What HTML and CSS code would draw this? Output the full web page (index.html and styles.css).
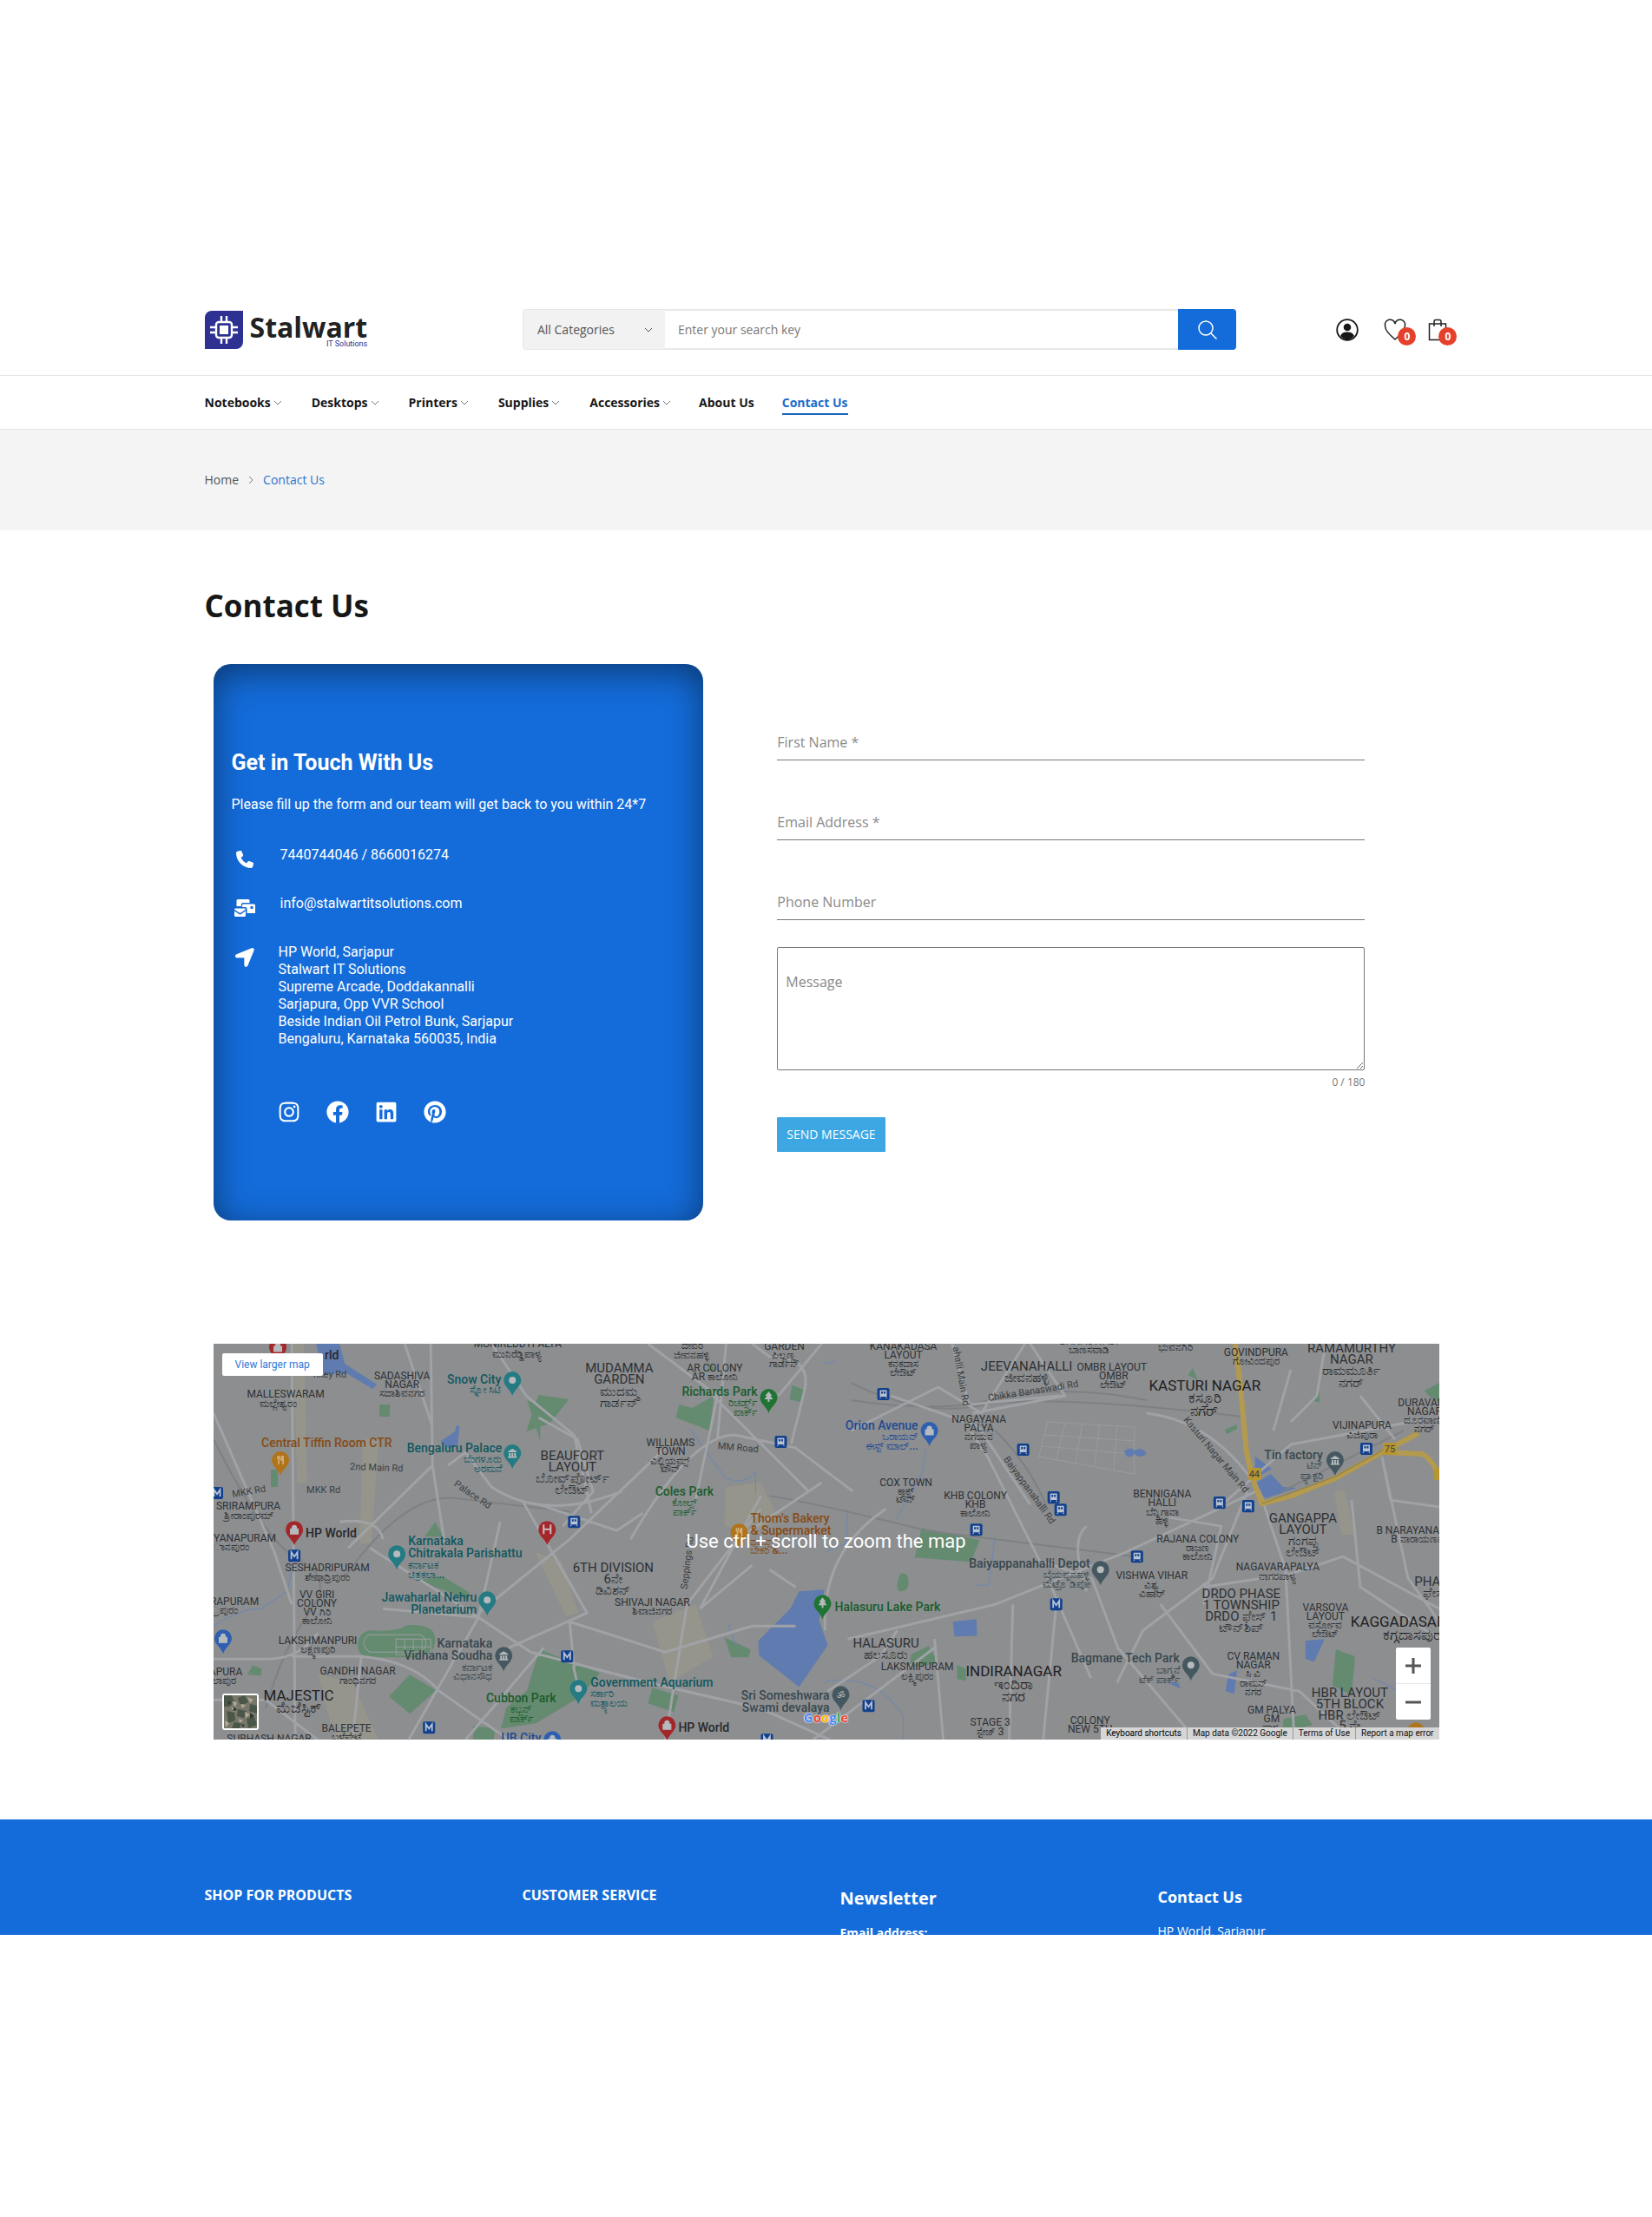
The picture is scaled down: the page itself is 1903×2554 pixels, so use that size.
FILE: index.html
```html
<!DOCTYPE html>
<html lang="en">
<head>
<meta charset="utf-8">
<meta name="viewport" content="width=device-width, initial-scale=1">
<title>Contact Us - Stalwart IT Solutions</title>
<link rel="stylesheet" href="styles.css">
</head>
<body>
<svg class="defs" aria-hidden="true">
  <symbol id="chev" viewBox="0 0 10 6"><path d="M1 1l4 4 4-4" fill="none" stroke="currentColor"/></symbol>
</svg>
<header class="site-header">
  <div class="container header-row">
    <a class="logo" href="#">
      <svg class="logo-mark" viewBox="0 0 44 44" aria-hidden="true">
        <path d="M8 0H44V36a8 8 0 0 1-8 8H0V8a8 8 0 0 1 8-8z" fill="#2e3192"/>
        <g fill="none" stroke="#fff" stroke-width="2.400"><rect x="13" y="13" width="18" height="18" rx="3"/><path d="M19 6v7M25 6v7M19 31v7M25 31v7M6 19h7M6 25h7M31 19h7M31 25h7"/></g>
        <rect x="17" y="17" width="10" height="10" fill="#fff"/>
      </svg>
      <span class="logo-text"><span class="logo-name">Stalwart</span><span class="logo-sub">IT Solutions</span></span>
    </a>
    <form class="search">
      <div class="search-cat">
        <select aria-label="Category"><option>All Categories</option></select>
        <svg width="10" height="6" aria-hidden="true"><use href="#chev"/></svg>
      </div>
      <input type="text" placeholder="Enter your search key" aria-label="Search">
      <button type="button" aria-label="Search"><svg width="24" height="24" viewBox="0 0 24 24" fill="none" stroke="#fff" stroke-width="1.5"><circle cx="10" cy="10" r="8"/><path d="M15.5 15.5l7 7"/></svg></button>
    </form>
    <nav class="tools" aria-label="Account">
      <a href="#" aria-label="Account"><svg width="26" height="26" viewBox="0 0 26 26"><circle cx="13" cy="13" r="11.8" fill="none" stroke="#171717" stroke-width="1.8"/><circle cx="13" cy="10" r="4.3" fill="#171717"/><path d="M5 20c2-4 5-4.500 8-4.500s6 .5 8 4.500c-2 2.700-5 4.300-8 4.300S7 22.700 5 20z" fill="#171717"/></svg></a>
      <a href="#" aria-label="Wishlist"><svg width="26" height="26" viewBox="0 0 26 26"><path d="M13 24C7 18.500 1.500 14 1.500 8a5.800 5.800 0 0 1 11.500-2A5.800 5.800 0 0 1 24.500 8c0 6-5.500 10.500-11.500 16z" fill="none" stroke="#222" stroke-width="1.500"/></svg><span class="badge">0</span></a>
      <a href="#" aria-label="Cart"><svg width="22" height="26" viewBox="0 0 22 26"><path d="M1.500 6h19v18.500h-19zM7 9V3.500a2 2 0 0 1 2-2h4a2 2 0 0 1 2 2V9" fill="none" stroke="#222" stroke-width="1.500"/></svg><span class="badge">0</span></a>
    </nav>
  </div>
</header>
<nav class="main-nav" aria-label="Main">
  <div class="container nav-row">
    <a href="#">Notebooks<svg width="10" height="6"><use href="#chev"/></svg></a>
    <a href="#">Desktops<svg width="10" height="6"><use href="#chev"/></svg></a>
    <a href="#">Printers<svg width="10" height="6"><use href="#chev"/></svg></a>
    <a href="#">Supplies<svg width="10" height="6"><use href="#chev"/></svg></a>
    <a href="#">Accessories<svg width="10" height="6"><use href="#chev"/></svg></a>
    <a href="#">About Us</a>
    <a href="#" class="active">Contact Us</a>
  </div>
</nav>
<div class="crumbs">
  <nav class="container crumb-row" aria-label="Breadcrumb">
    <a href="#">Home</a>
    <svg width="6" height="10" viewBox="0 0 6 10"><path d="M1 1l4 4-4 4" fill="none" stroke="#777"/></svg>
    <span>Contact Us</span>
  </nav>
</div>
<main class="container">
  <h1>Contact Us</h1>
  <div class="contact-row">
    <section class="card">
      <h2>Get in Touch With Us</h2>
      <p class="lead">Please fill up the form and our team will get back to you within 24*7</p>
      <ul class="info">
        <li><svg width="20" height="20" viewBox="0 0 512 512"><path d="M164.900 24.600c-7.700-18.600-28-28.500-47.400-23.200l-88 24C12.100 30.200 0 46 0 64C0 311.400 200.600 512 448 512c18 0 33.800-12.100 38.600-29.500l24-88c5.300-19.400-4.600-39.700-23.200-47.400l-96-40c-16.300-6.800-35.200-2.100-46.300 11.600L304.700 368C234.300 334.700 177.300 277.700 144 207.300L193.300 167c13.700-11.200 18.400-30 11.600-46.300l-40-96z"/></svg><span class="one">7440744046 / 8660016274</span></li>
        <li><svg width="24" height="20" viewBox="0 0 24 20"><path d="M4 0h12a1.500 1.500 0 0 1 1.500 1.500V4H10a2 2 0 0 0-2 2v2H2.500V1.500A1.500 1.500 0 0 1 4 0z"/><path fill-rule="evenodd" d="M10.500 5.500h12A1.500 1.500 0 0 1 24 7v9h-9.500v-5a2 2 0 0 0-2-2H9V7a1.500 1.500 0 0 1 1.500-1.500zM18.500 8v3h3V8z"/><path d="M1.500 10.500h10a1.500 1.500 0 0 1 1.500 1.200L6.500 16 0 11.700a1.500 1.500 0 0 1 1.500-1.200zM0 13.500l6.500 4.200 6.500-4.200v5a1.500 1.500 0 0 1-1.500 1.500h-10A1.500 1.500 0 0 1 0 18.500z"/></svg><span class="one">info@stalwartitsolutions.com</span></li>
        <li><svg width="22" height="22" viewBox="16 40 424 432"><path d="M429.600 92.100c4.900-11.900 2.100-25.600-7-34.700s-22.800-11.900-34.700-7l-352 144c-14.200 5.800-22.200 20.800-19.300 35.800s16.100 25.800 31.400 25.800H224V432c0 15.300 10.800 28.400 25.800 31.400s30-5.100 35.800-19.300l144-352z" stroke="#fff" stroke-width="16"/></svg><address>HP World, Sarjapur<br>Stalwart IT Solutions<br>Supreme Arcade, Doddakannalli<br>Sarjapura, Opp VVR School<br>Beside Indian Oil Petrol Bunk, Sarjapur<br>Bengaluru, Karnataka 560035, India</address></li>
      </ul>
      <div class="social">
        <a href="#" aria-label="Instagram"><svg viewBox="0 0 448 512"><path d="M224.100 141c-63.600 0-114.900 51.300-114.900 114.900s51.300 114.900 114.900 114.900S339 319.500 339 255.900 287.700 141 224.100 141zm0 189.600c-41.100 0-74.700-33.500-74.700-74.700s33.500-74.700 74.700-74.700 74.700 33.500 74.700 74.700-33.600 74.700-74.700 74.700zm146.400-194.300c0 14.900-12 26.800-26.800 26.800-14.900 0-26.800-12-26.800-26.800s12-26.800 26.800-26.800 26.800 12 26.800 26.800zm76.100 27.200c-1.700-35.900-9.900-67.700-36.200-93.900-26.200-26.200-58-34.400-93.900-36.200-37-2.100-147.900-2.100-184.900 0-35.800 1.700-67.600 9.900-93.900 36.100s-34.400 58-36.200 93.900c-2.100 37-2.100 147.900 0 184.900 1.700 35.900 9.900 67.700 36.200 93.900s58 34.400 93.900 36.200c37 2.100 147.900 2.100 184.900 0 35.900-1.700 67.700-9.900 93.900-36.200 26.200-26.200 34.400-58 36.200-93.900 2.100-37 2.100-147.800 0-184.800zM398.800 388c-7.800 19.600-22.900 34.700-42.600 42.600-29.500 11.700-99.500 9-132.100 9s-102.700 2.600-132.100-9c-19.600-7.800-34.700-22.900-42.600-42.600-11.700-29.500-9-99.500-9-132.100s-2.600-102.700 9-132.100c7.800-19.600 22.900-34.700 42.600-42.600 29.500-11.700 99.500-9 132.100-9s102.700-2.600 132.100 9c19.600 7.800 34.700 22.900 42.600 42.600 11.700 29.500 9 99.500 9 132.100s2.700 102.700-9 132.100z"/></svg></a>
        <a href="#" aria-label="Facebook"><svg viewBox="0 0 512 512"><path d="M504 256C504 119 393 8 256 8S8 119 8 256c0 123.780 90.690 226.380 209.250 245V327.690h-63V256h63v-54.640c0-62.150 37-96.480 93.670-96.480 27.140 0 55.520 4.840 55.520 4.840v61h-31.280c-30.800 0-40.410 19.120-40.410 38.730V256h68.780l-11 71.690h-57.780V501C413.310 482.380 504 379.780 504 256z"/></svg></a>
        <a href="#" aria-label="LinkedIn"><svg viewBox="0 0 448 512"><path d="M416 32H31.900C14.300 32 0 46.500 0 64.300v383.400C0 465.500 14.300 480 31.900 480H416c17.600 0 32-14.500 32-32.300V64.300c0-17.800-14.400-32.300-32-32.300zM135.400 416H69V202.200h66.500V416zm-33.200-243c-21.300 0-38.500-17.300-38.500-38.500S80.900 96 102.200 96c21.200 0 38.500 17.300 38.500 38.500 0 21.300-17.200 38.500-38.500 38.500zm282.100 243h-66.400V312c0-24.800-.5-56.700-34.500-56.700-34.600 0-39.900 27-39.900 54.900V416h-66.400V202.200h63.700v29.200h.9c8.900-16.800 30.600-34.500 62.900-34.500 67.200 0 79.700 44.300 79.700 101.900V416z"/></svg></a>
        <a href="#" aria-label="Pinterest"><svg viewBox="0 0 496 512"><path d="M496 256c0 137-111 248-248 248-25.600 0-50.200-3.900-73.400-11.100 10.100-16.500 25.200-43.500 30.800-65 3-11.600 15.400-59 15.400-59 8.100 15.400 31.700 28.500 56.800 28.500 74.800 0 128.700-68.800 128.700-154.300 0-81.900-66.900-143.200-152.900-143.200-107 0-163.900 71.800-163.900 150.100 0 36.400 19.400 81.700 50.300 96.100 4.700 2.200 7.200 1.200 8.300-3.300.8-3.400 5-20.300 6.900-28.100.6-2.500.3-4.700-1.700-7.100-10.100-12.500-18.300-35.300-18.300-56.600 0-54.700 41.400-107.600 112-107.600 60.900 0 103.600 41.500 103.600 100.900 0 67.100-33.900 113.600-78 113.600-24.300 0-42.600-20.100-36.700-44.800 7-29.500 20.500-61.300 20.500-82.600 0-19-10.200-34.900-31.400-34.900-24.900 0-44.900 25.700-44.900 60.200 0 22 7.400 36.800 7.400 36.800s-24.500 103.800-29 123.200c-5 21.400-3 51.600-.9 71.200C65.400 450.900 0 361.100 0 256 0 119 111 8 248 8s248 111 248 248z"/></svg></a>
      </div>
    </section>
    <form class="contact-form">
      <input type="text" placeholder="First Name *" aria-label="First Name">
      <input type="email" placeholder="Email Address *" aria-label="Email Address">
      <input type="tel" placeholder="Phone Number" aria-label="Phone Number">
      <textarea placeholder="Message" aria-label="Message" maxlength="180"></textarea>
      <span class="count">0 / 180</span>
      <button type="button">SEND MESSAGE</button>
    </form>
  </div>
  <section class="map" aria-label="Map">
    <svg class="map-canvas" viewBox="0 0 1411 456" preserveAspectRatio="xMidYMid slice">
      <defs>
        <pattern id="ga" width="46" height="38" patternUnits="userSpaceOnUse" patternTransform="rotate(3)"><path d="M0 5H46M0 14H30M12 24H46M0 32H46M6 0V38M17 5V32M30 0V24M39 14V38"/></pattern>
        <pattern id="gb" width="54" height="44" patternUnits="userSpaceOnUse" patternTransform="rotate(28)"><path d="M0 6H54M0 18H36M14 27H54M0 38H54M8 0V38M22 6V44M36 0V27M47 18V44"/></pattern>
        <pattern id="gc" width="50" height="50" patternUnits="userSpaceOnUse" patternTransform="rotate(-17)"><path d="M0 8H50M10 17H50M0 29H38M0 42H50M6 0V42M19 8V50M31 0V29M42 17V50"/></pattern>
        <g id="pin"><path d="M0 0C-2-7-10-11-10-18a10 10 0 1 1 20 0C10-11 2-7 0 0z"/></g>
        <g id="dot"><circle cy="-18" r="4" fill="#b5babc"/></g>
        <g id="bld"><path d="M-5-20l5-3 5 3v1H-5zM-4-18h2v4h-2zM-1-18h2v4h-2zM2-18h2v4h-2zM-5-14H5v1.500H-5z" fill="#b5babc"/></g>
        <g id="lock"><path d="M-4.500-19h9v6h-9zM-2.500-19v-1.500a2.500 2.500 0 0 1 5 0V-19" fill="#b5babc" stroke="#b5babc"/></g>
        <g id="fork"><path d="M-3-23v4M-1-23v4M-2-19v6M3-23v10M3-23q-2 1-2 5h2" fill="none" stroke="#d5b583" stroke-width="1.500"/></g>
        <g id="tree"><path d="M0-25l4 5H2l3 4H1v3h-2v-3h-4l3-4h-2z" fill="#b5babc"/></g>
        <g id="metro"><rect x="-7" y="-7" width="14" height="14" rx="2" fill="#12408c"/><path d="M-3.500 4v-8L0 1l3.500-5v8" fill="none" stroke="#b9c2d2" stroke-width="1.800"/></g>
        <g id="train"><rect x="-7" y="-7" width="14" height="14" rx="2" fill="#12408c"/><path fill-rule="evenodd" d="M-4-4.500h8v7.500h-8zM-2.500-3v2.500h2V-3zM.5-3v2.500h2V-3z" fill="#b9c2d2"/><path d="M-3 3.500l-1 1.500M3 3.500l1 1.500" stroke="#b9c2d2"/></g>
      </defs>
      <rect width="1411" height="456" fill="#8c8e90"/>
      <g stroke="#999b9e" fill="none">
        <path d="M0 0H250V190L200 456H0z" fill="url(#ga)" stroke="none"/>
        <path d="M250 200L560 215 600 456H200z" fill="url(#gb)" stroke="none"/>
        <path d="M380 0H620L560 215 250 200 300 100z" fill="url(#gc)" stroke="none" opacity=".6"/>
        <path d="M560 215L740 190 720 270 660 456H560z" fill="url(#gc)" stroke="none" opacity=".7"/>
        <path d="M620 0H960L990 75 870 95 760 180 600 160z" fill="url(#gb)" stroke="none" opacity=".7"/>
        <path d="M730 340H985L1010 456H700z" fill="url(#ga)" stroke="none"/>
        <path d="M1040 0H1411V110L1190 160 1040 70z" fill="url(#gc)" stroke="none" opacity=".8"/>
        <path d="M1060 250L1411 170V456H1050z" fill="url(#gb)" stroke="none" opacity=".7"/>
        <path d="M960 90L1060 96V150L950 130zM980 92L970 134M1000 92L992 138M1020 94L1014 140M1040 95L1036 146M957 105L1060 112M954 118L1060 127"/>
      </g>
      <g fill="#9c9a8a" opacity=".6">
        <path d="M92 0h12l4 160h-12zM172 110h18l-8 120h-14zM590 165l40-5 20 40-30 20-32-10zM505 320l50-20 20 60-50 30zM1290 170l12-2 12 52h-16zM370 240l30 10 20 60-14 4zM120 380l40 10 30 66h-50z"/>
      </g>
      <g fill="#648a70">
        <path d="M374 59l35 5-22 28-27 9zM536 70l15 4 25-14-5 40-39-15zM666 48l16 6-4 14-15-4zM191 70h12v14h-12zM66 145h8v20h-8zM361 65l15 7v40zM255 205l10 17h-22zM815 212l67 14-10 25-65-5zM790 265q9-3 10 8t-8 12-2-20zM803 358l20-10 12 20-34 4zM234 272l30-4 30 18v9zM375 352l70 27-24 28-50 30-40 6 6-24 24-20zM226 381l30 18-30 27-24-20zM588 338l30 14-2 9h-20zM505 396l30 9-5 19-30-10zM1394 54l17-9v23l-12-8zM1267 65l6-12v15l-8-3zM1292 352l22 8-4 45-22-12zM1232 432l25-5 8 12-35 8zM1164 99l14-6v5l-12 6zM856 370l10 4v14l-10-2zM299 440l26 3-3 13h-23zM45 370l10 4v8l-16-1zM1122 36l5-8 6 14zM570 22l8 7-9 4z"/>
        <path d="M182 330q30 2 40-6 34-2 33 17 0 20-26 20h-50q-13-1-13-16 2-14 16-15z"/>
      </g>
      <path d="M210 340h40v18h-40zM220 340v18M230 340v18M240 340v18M210 349h40M178 335h60q12 6 2 20h-60q-13-9-2-20" fill="none" stroke="#9a9fa0"/>
      <g fill="#5f7bb0">
        <path d="M118 0h27l6 23 37 24-5 5-30-18-26 1zM262 112l16-11 2-7 3 1-2 22-9 4-10-7zM674 285l29-2-6 36 10 28-33 48-46-36-1-17 37-37zM1199 130l19 14-19 11zM1217 150l14 15 16 1-36 12-14-16zM1048 124q8-6 12-1 10-5 14 4-8 6-14 0-8 8-12-3zM851 320l27-3 1 19-26 1zM1257 342l22-2-12 26-10-3zM1168 381l10-5-3 27-10-3zM1102 392l11 5-2-6-10-2z"/>
      </g>
      <g fill="none" stroke="#6f87b4">
        <path d="M548 98l40 55q20 12 36-5v25M820 120l-4 28-30 54M0 325q30-20 55-20l30-20 10-50M704 389q60-10 90 40v27M1335 385l30 15M900 220l-8 58h-14M730 190l-2 40-24 10M592 322l10 26M715 20q-10 5-14 0"/>
      </g>
      <g fill="none" stroke="#7e8083" stroke-width="2">
        <path d="M150 270q70-100 130-92l130 15M0 110q60 120 100 140t10 60-50 110M1074 65q-100-20-180 0-60 15-160 0M734 45q80 40 150 26t300 13M640 175q60 10 180 40l240 30M900 100q40 40 60 90M1370 100l-140 70"/>
      </g>
      <g fill="none" stroke="#a0a2a5" stroke-width="3" stroke-linejoin="round">
        <path d="M0 80L70 240l20 60M90 0l4 456M250 0l2 140 14 90M195 225q-5-25-50-20M270 140l20-15 30 40q60 40 150 5M155 235L252 140M220 0L252 95M320 0L360 60l55 45 20 90M374 85l45 25 18 60-35 40M480 225q70-120 120-120l70 15 66 50M590 0L580 110M620 0L640 15q50 0 40 40l-15 60M610 220l90-60M374 185l90 30 30-20M630 175L560 305M700 0L650 60M305 310L410 225 520 120M195 305L305 315l60 40L500 390l130 30 80 36M305 315L180 235M305 315L330 205M305 315l-80 140M355 180L430 310 340 350M380 350l-90 106M430 310l-40-70M410 320l110 35 100-30 50 0M410 320l5 55 8 35M0 363h60q40 0 60-30M90 360h80q60 5 90 40l80 56M0 410h60l60 46M170 360l-10 96M560 305l60-50M500 0l80 60-25 120M575 60l110 110M640 260l30 20M520 456L545 300 630 190M730 340L900 300 1050 240 1200 170M704 330q-5-90 70-140M871 100l20 30 60 120 60 20 30 80 90 106M1005 285q-20-60 0-75M970 300l-15 156M920 300l-4 156M830 340l10 116M707 400l60-40 20-30M690 456L830 350M1074 80q80 10 130 90l30 90 10 196M1160 186l80-70 160-30M1100 200l60 10-20 90M1140 280l100-15 60-20 111 60M1345 130l30 140 36 50M1345 130l10 50 56 8M1240 30l-20 70M1280 0l-10 60-30 30M1320 60l40 50M1190 170l-40 100-80 60-30 60M940 0l40 60-106 20M850 0l20 70 104-10M734 100l100-50 50 30 50-80M780 60l100 35 60 90M1010 385L960 270M1090 300l60 80 100 20 60 56M1310 180l10 100 91 60"/>
      </g>
      <g fill="none" stroke="#b39a4e" stroke-width="6" stroke-linejoin="round">
        <path d="M1176 0l6 49 7 76 7 30 11 29 34-9 50-20 56-31 40-21M1347 125l44 2q10 4 20 25"/>
        <path d="M1207 184l84-31 56-31" stroke="#8d7a40" stroke-width="1"/>
      </g>
      <g><rect x="1191" y="143" width="15" height="14" rx="2" fill="#b79530"/><rect x="1346" y="114" width="16" height="14" rx="2" fill="#b79530"/><rect x="1405" y="143" width="15" height="14" rx="2" fill="#b79530"/></g>
      <g class="mid sm"><text x="1198" y="154">44</text><text x="1354" y="125">75</text></g>

      <g class="mid area">
        <text x="83" y="62">MALLESWARAM</text><text x="74" y="73">ಮಲ್ಲೇಶ್ವರಂ</text>
        <text x="217" y="41">SADASHIVA</text><text x="217" y="51">NAGAR</text><text x="217" y="61">ಸದಾಶಿವನಗರ</text>
        <text x="350" y="4">MUNIREDDYPALYA</text><text x="350" y="16">ಮುನಿರೆಡ್ಡಿಪಾಳ್ಯ</text>
        <text x="40" y="191">SRIRAMPURA</text><text x="40" y="202">ಶ್ರೀರಾಂಪುರಮ್</text>
        <text x="36" y="228">YANAPURAM</text><text x="20" y="238">ಾನಪುರಂ</text>
        <text x="551" y="6">ದೇವರ</text><text x="551" y="17">ಜೀವನಹಳ್ಳಿ</text>
        <text x="577" y="32">AR COLONY</text><text x="577" y="42">AR ಕಾಲೋನಿ</text>
        <text x="657" y="7">GARDEN</text><text x="657" y="17">ಪಿಲ್ಲಣ್ಣ</text><text x="657" y="27">ಗಾರ್ಡನ್</text>
        <text x="526" y="118">WILLIAMS</text><text x="526" y="128">TOWN</text><text x="526" y="139">ವಿಲ್ಲಿಯಮ್ಸ್</text><text x="526" y="148">ಟೌನ್</text>
        <text x="794" y="7">KANAKADASA</text><text x="794" y="17">LAYOUT</text><text x="794" y="27">ಕನಕದಾಸ</text><text x="794" y="37">ಲೇಔಟ್</text>
        <text x="1008" y="1">BANASWADI</text><text x="1008" y="11">ಬಾಣಸವಾಡಿ</text>
        <text x="1034" y="31">OMBR LAYOUT</text><text x="1036" y="41">OMBR</text><text x="1036" y="51">ಲೇಔಟ್</text>
        <text x="881" y="91">NAGAYANA</text><text x="881" y="101">PALYA</text><text x="881" y="111">ನಗಯನ</text><text x="881" y="121">ಪಾಳ್ಯ</text>
        <text x="797" y="164">COX TOWN</text><text x="797" y="174">ಕಾಕ್ಸ್</text><text x="797" y="183">ಟೌನ್</text>
        <text x="877" y="179">KHB COLONY</text><text x="877" y="189">KHB</text><text x="877" y="199">ಕಾಲೋನಿ</text>
        <text x="1107" y="8">ಭುವನಗಿರಿ</text>
        <text x="1200" y="14">GOVINDPURA</text><text x="1200" y="24">ಗೋವಿಂದಪುರ</text>
        <text x="1392" y="72">DURAVANI</text><text x="1394" y="82">NAGAR</text><text x="1392" y="92">ದೂರವಾಣಿ</text><text x="1394" y="102">ನಗರ್</text>
        <text x="1322" y="98">VIJINAPURA</text><text x="1322" y="109">ವಿಜಿಪುರಾ</text>
        <text x="1092" y="177">BENNIGANA</text><text x="1092" y="187">HALLI</text><text x="1092" y="198">ಬೆನ್ನಿಗಾನಾ</text><text x="1092" y="208">ಹಳ್ಳಿ</text>
        <text x="1133" y="229">RAJANA COLONY</text><text x="1133" y="239">ರಾಜಣ</text><text x="1133" y="249">ಕಾಲೋನಿ</text>
        <text x="1390" y="219">B NARAYANAPURA</text><text x="1390" y="229">B ನಾರಾಯಣಪುರ</text>
        <text x="131" y="262">SESHADRIPURAM</text><text x="131" y="273">ಶೇಷಾದ್ರಿಪುರಂ</text>
        <text x="119" y="293">VV GIRI</text><text x="119" y="303">COLONY</text><text x="119" y="313">VV ಗಿರಿ</text><text x="119" y="323">ಕಾಲೋನಿ</text>
        <text x="24" y="301">RAPURAM</text><text x="12" y="311">್ರಪುರಂ</text>
        <text x="120" y="346">LAKSHMANPURI</text><text x="120" y="356">ಲಕ್ಷ್ಮಣಪುರಿ</text>
        <text x="14" y="382">APURA</text><text x="12" y="392">ಲಾಪುರ</text>
        <text x="166" y="381">GANDHI NAGAR</text><text x="166" y="392">ಗಾಂಧಿನಗರ</text>
        <text x="153" y="447">BALEPETE</text><text x="153" y="457">ಬಳೆಪೇಟೆ</text>
        <text x="64" y="459">SUBHASH NAGAR</text>
        <text x="505" y="302">SHIVAJI NAGAR</text><text x="505" y="312">ಶಿವಾಜಿನಗರ</text>
        <text x="810" y="376">LAKSMIPURAM</text><text x="810" y="387">ಲಕ್ಷ್ಮಿಪುರಂ</text>
        <text x="894" y="440">STAGE 3</text><text x="894" y="451">ಸ್ಟೇಜ್ 3</text>
        <text x="1009" y="438">COLONY</text><text x="1009" y="448">NEW 5TH</text>
        <text x="1080" y="271">VISHWA VIHAR</text><text x="1080" y="282">ವಿಶ್ವ</text><text x="1080" y="292">ವಿಹಾರ್</text>
        <text x="1225" y="261">NAGAVARAPALYA</text><text x="1225" y="272">ನಾಗರಪಾಳ್ಯ</text>
        <text x="1280" y="308">VARSOVA</text><text x="1280" y="318">LAYOUT</text><text x="1280" y="328">ವರ್ಸೋವ</text><text x="1280" y="338">ಲೇಔಟ್</text>
        <text x="1197" y="364">CV RAMAN</text><text x="1197" y="374">NAGAR</text><text x="1197" y="384">ಸಿ ವಿ</text><text x="1197" y="395">ರಾಮನ್</text><text x="1197" y="405">ನಗರ</text>
        <text x="1218" y="426">GM PALYA</text><text x="1218" y="436">GM</text><text x="1218" y="446">ಪಾಳ್ಯ</text>
      </g>
      <g class="mid area-md">
        <text x="467" y="33">MUDAMMA</text><text x="467" y="46">GARDEN</text><text x="467" y="60">ಮುದಮ್ಮ</text><text x="467" y="73">ಗಾರ್ಡನ್</text>
        <text x="413" y="134">BEAUFORT</text><text x="413" y="147">LAYOUT</text><text x="413" y="160">ಬೋವ್‌ಪೋರ್ಟ್</text><text x="413" y="173">ಲೇಔಟ್</text>
        <text x="936" y="31">JEEVANAHALLI</text><text x="936" y="44">ಜೀವನಹಳ್ಳಿ</text>
        <text x="1310" y="10">RAMAMURTHY</text><text x="1310" y="23">NAGAR</text><text x="1310" y="36">ರಾಮಮೂರ್ತಿ</text><text x="1310" y="50">ನಗರ್</text>
        <text x="1254" y="206">GANGAPPA</text><text x="1254" y="219">LAYOUT</text><text x="1254" y="232">ಗಂಗಪ್ಪ</text><text x="1254" y="245">ಲೇಔಟ್</text>
        <text x="460" y="263">6TH DIVISION</text><text x="460" y="276">6ನೇ</text><text x="460" y="289">ಡಿವಿಶನ್</text>
        <text x="774" y="350">HALASURU</text><text x="774" y="363">ಹಲಸೂರು</text>
        <text x="1183" y="293">DRDO PHASE</text><text x="1183" y="306">1 TOWNSHIP</text><text x="1183" y="319">DRDO ಫೇಸ್ 1</text><text x="1183" y="332">ಟೌನ್‌ಶಿಪ್</text>
        <text x="1308" y="407">HBR LAYOUT</text><text x="1308" y="420">5TH BLOCK</text><text x="1308" y="433">HBR ಲೇಔಟ್</text><text x="1308" y="445">5 ನೇ</text>
        <text x="1406" y="279">PHASE</text><text x="1406" y="292">ಫೇಸ್</text>
      </g>
      <g class="mid area-lg">
        <text x="1141" y="54">KASTURI NAGAR</text><text x="1141" y="68">ಕಸ್ತೂರಿ</text><text x="1141" y="83">ನಗರ್</text>
        <text x="98" y="411">MAJESTIC</text><text x="98" y="425">ಮೆಜೆಸ್ಟಿಕ್</text>
        <text x="921" y="383">INDIRANAGAR</text><text x="921" y="398">ಇಂದಿರಾ</text><text x="921" y="412">ನಗರ</text>
        <text x="1380" y="326">KAGGADASAPURA</text><text x="1380" y="341">ಕಗ್ಗದಾಸಪುರ</text>
      </g>

      <g class="poi">
        <g class="teal">
          <text class="end" x="331" y="46">Snow City</text><text class="end kn" x="331" y="57">ಸ್ನೋ ಸಿಟಿ</text>
          <text class="end" x="332" y="125">Bengaluru Palace</text><text class="end kn" x="332" y="137">ಬೆಂಗಳೂರು</text><text class="end kn" x="332" y="148">ಅರಮನೆ</text>
          <text x="224" y="232">Karnataka</text><text x="224" y="246">Chitrakala Parishattu</text><text class="kn" x="224" y="259">ಕರ್ನಾಟಕ</text><text class="kn" x="224" y="270">ಚಿತ್ರಕಲಾ...</text>
          <text class="end" x="303" y="297">Jawaharlal Nehru</text><text class="end" x="303" y="311">Planetarium</text>
          <text x="434" y="395">Government Aquarium</text><text class="kn" x="434" y="407">ಸರ್ಕಾರಿ</text><text class="kn" x="434" y="418">ಮತ್ಸ್ಯಾಲಯ</text>
        </g>
        <g class="orange">
          <text x="55" y="119">Central Tiffin Room CTR</text>
          <text x="618" y="206">Thom's Bakery</text><text x="618" y="220">&amp; Supermarket</text><text class="kn" x="618" y="232">ಥಾಮ್ಸ್</text><text class="kn" x="618" y="242">ಬೇಕರಿ &amp;...</text>
        </g>
        <g class="green">
          <text class="end" x="626" y="60">Richards Park</text><text class="end kn" x="626" y="72">ರಿಚರ್ಡ್ಸ್</text><text class="end kn" x="626" y="83">ಪಾರ್ಕ್</text>
          <text class="midt" x="542" y="175">Coles Park</text><text class="midt kn" x="542" y="187">ಕೋಲ್ಸ್</text><text class="midt kn" x="542" y="198">ಪಾರ್ಕ್</text>
          <text x="715" y="308">Halasuru Lake Park</text>
          <text class="midt" x="354" y="413">Cubbon Park</text><text class="midt kn" x="354" y="425">ಕಬ್ಬನ್</text><text class="midt kn" x="354" y="436">ಪಾರ್ಕ್</text>
        </g>
        <g class="blue">
          <text class="end" x="811" y="99">Orion Avenue</text><text class="end kn" x="811" y="111">ಒರಾಯನ್</text><text class="end kn" x="811" y="122">ಈಸ್ಟ್ ಮಾಲ್...</text>
          <text class="end" x="377" y="459">UB City</text>
        </g>
        <g class="dark">
          <text x="128" y="18">rld</text><text x="106" y="223">HP World</text><text x="535" y="447">HP World</text>
        </g>
        <g class="slate">
          <text class="end" x="1277" y="133">Tin factory</text><text class="end kn" x="1277" y="144">ಟಿನ್</text><text class="end kn" x="1277" y="156">ಫ್ಯಾಕ್ಟರಿ</text>
          <text class="end" x="1009" y="258">Baiyappanahalli Depot</text><text class="end kn" x="1009" y="270">ಬೈಯಪ್ಪನಹಳ್ಳಿ</text><text class="end kn" x="1009" y="281">ಮೆಟ್ರೊ ಡಿಪೋ</text>
          <text class="end" x="1112" y="367">Bagmane Tech Park</text><text class="end kn" x="1112" y="380">ಬಾಗ್ಮನೆ</text><text class="end kn" x="1112" y="391">ಟೆಕ್ ಪಾರ್ಕ್</text>
          <text class="end" x="321" y="350">Karnataka</text><text class="end" x="321" y="364">Vidhana Soudha</text><text class="end kn" x="321" y="377">ಕರ್ನಾಟಕ</text><text class="end kn" x="321" y="387">ವಿಧಾನಸೌಧ</text>
          <text class="end" x="709" y="410">Sri Someshwara</text><text class="end" x="709" y="424">Swami devalaya</text>
        </g>
      </g>
      <g class="sm">
        <text transform="translate(115 39)">nkey Rd</text><text transform="translate(22 177) rotate(-10)">MKK Rd</text><text x="107" y="172">MKK Rd</text>
        <text transform="translate(157 145) rotate(2)">2nd Main Rd</text><text transform="translate(276 163) rotate(34)">Palace Rd</text>
        <text transform="translate(580 121) rotate(5)">MM Road</text><text transform="translate(851 4) rotate(80)">ahalli Main Rd</text>
        <text transform="translate(892 66) rotate(-9)">Chikka Banaswadi Rd</text><text transform="translate(909 133) rotate(54)">Baiyappanahalli Rd</text>
        <text transform="translate(1116 88) rotate(50)">Kasturi Nagar Main Rd</text><text transform="translate(545 283) rotate(-83)">Seppings Rd</text>
      </g>

      <g fill="#a3272a"><use href="#pin" x="74" y="22"/><use href="#pin" x="93" y="232"/><use href="#pin" x="384" y="232"/><use href="#pin" x="522" y="457"/></g>
      <g fill="#257b83"><use href="#pin" x="344" y="60"/><use href="#pin" x="344" y="144"/><use href="#pin" x="211" y="260"/><use href="#pin" x="315" y="313"/><use href="#pin" x="420" y="415"/></g>
      <g fill="#b0741b"><use href="#pin" x="77" y="152"/><use href="#pin" x="605" y="235"/><use href="#pin" x="1384" y="464"/></g>
      <g fill="#1f7434"><use href="#pin" x="639" y="80"/><use href="#pin" x="701" y="317"/></g>
      <g fill="#2f5fb0"><use href="#pin" x="824" y="118"/><use href="#pin" x="11" y="357"/><use href="#pin" x="390" y="474"/></g>
      <g fill="#46585f"><use href="#pin" x="1291" y="152"/><use href="#pin" x="334" y="377"/><use href="#pin" x="1021" y="278"/><use href="#pin" x="1125" y="388"/><use href="#pin" x="722" y="422"/></g>
      <use href="#lock" x="74" y="22"/><use href="#lock" x="93" y="232"/><use href="#lock" x="522" y="457"/><use href="#lock" x="824" y="118"/><use href="#lock" x="11" y="357"/><use href="#lock" x="390" y="474"/>
      <use href="#bld" x="1291" y="152"/><use href="#bld" x="334" y="377"/><use href="#bld" x="344" y="144"/>
      <use href="#dot" x="1021" y="278"/><use href="#dot" x="1125" y="388"/><use href="#dot" x="211" y="260"/><use href="#dot" x="315" y="313"/><use href="#dot" x="420" y="415"/><use href="#dot" x="344" y="60"/>
      <use href="#fork" x="77" y="152"/><use href="#fork" x="605" y="235"/><use href="#tree" x="639" y="80"/><use href="#tree" x="701" y="317"/>
      <path d="M380 208v11M388 208v11M380 213.500h8" stroke="#c9bcbc" stroke-width="2"/>
      <text x="722" y="409" class="om">ॐ</text>
      <use href="#metro" x="4" y="172"/><use href="#metro" x="93" y="244"/><use href="#metro" x="407" y="360"/><use href="#metro" x="248" y="442"/><use href="#metro" x="637" y="456"/><use href="#metro" x="970" y="300"/><use href="#metro" x="754" y="417"/>
      <use href="#train" x="653" y="113"/><use href="#train" x="415" y="205"/><use href="#train" x="771" y="58"/><use href="#train" x="932" y="122"/><use href="#train" x="967" y="177"/><use href="#train" x="975" y="191"/><use href="#train" x="878" y="214"/><use href="#train" x="1158" y="183"/><use href="#train" x="1191" y="187"/><use href="#train" x="1327" y="121"/><use href="#train" x="1063" y="245"/>
    </svg>
    <p class="map-hint">Use ctrl + scroll to zoom the map</p>
    <a class="map-link" href="#">View larger map</a>
    <button class="map-sat" type="button" aria-label="Satellite view"><svg width="38" height="38" viewBox="0 0 38 38"><rect width="38" height="38" fill="#77776b"/><path d="M0 0h9l3 8-6 5H0zM16 3l8-3 4 8-9 4zM30 10l8 2v9l-9-3zM3 18l9 2 1 9-8 3zM16 16l10 2-3 8-8-2zM26 27l9-2 3 9-10 4zM12 31l8 1-2 6H9z" fill="#4a5648"/><path d="M9 7l6 1-2 6zM27 2l7 3-4 4zM8 14l7 1-4 4zM24 19l6 3-5 4zM17 27l5 2-4 3zM1 29l5 3-4 5zM19 10l6 1-4 4z" fill="#b5a995"/><path d="M12 13l3 4-5 1zM30 20l5 4-5 3zM5 6l3 2-3 3zM20 33l4 1-2 3z" fill="#2b3630"/></svg></button>
    <div class="google" aria-label="Google"><span class="b">G</span><span class="r">o</span><span class="y">o</span><span class="b">g</span><span class="g">l</span><span class="r">e</span></div>
    <div class="map-zoom">
      <button type="button" aria-label="Zoom in"><svg width="18" height="18"><path d="M9 0v18M0 9h18" stroke="#555" stroke-width="3"/></svg></button>
      <button type="button" aria-label="Zoom out"><svg width="18" height="18"><path d="M0 9h18" stroke="#555" stroke-width="3"/></svg></button>
    </div>
    <div class="map-legal"><button type="button">Keyboard shortcuts</button><span>Map data ©2022 Google</span><a href="#">Terms of Use</a><a href="#">Report a map error</a></div>
  </section>
</main>
<footer>
  <div class="container foot-grid">
    <section><h3>SHOP FOR PRODUCTS</h3></section>
    <section><h3>CUSTOMER SERVICE</h3></section>
    <section><h3 class="xl">Newsletter</h3><p><b>Email address:</b></p></section>
    <section><h3 class="lg">Contact Us</h3><p>HP World, Sarjapur</p></section>
  </div>
</footer>
</body>
</html>
```
FILE: styles.css
```css
* { box-sizing: border-box; }
body { margin: 0; padding: 325px 0; background: #fff; color: #171717; font: 14px/20px "Open Sans", sans-serif; }
a { color: inherit; text-decoration: none; }
h1, h2, h3, p, ul { margin: 0; padding: 0; }
button, input, select, textarea { font: inherit; border: 0; margin: 0; padding: 0; border-radius: 0; background: none; }
svg { flex: none; }
.defs { position: absolute; width: 0; height: 0; }
.container { max-width: 1432px; margin: 0 auto; }

.header-row { display: grid; grid-template-columns: 334fr 821fr 211fr; gap: 32px; align-items: center; padding: 31px 0 29px; }
.logo { display: flex; gap: 8px; align-items: center; }
.logo-mark { width: 44px; height: 44px; }
.logo-text { display: flex; flex-direction: column; align-items: flex-end; padding-top: 4px; }
.logo-name { font-size: 32px; line-height: 30px; font-weight: 700; color: #222; }
.logo-sub { font: 9px/9px Roboto, sans-serif; color: #2e3192; }
.search { display: flex; height: 47px; }
.search-cat { position: relative; flex: none; width: 164px; background: #f2f2f2; border: 1px solid #e8e8e8; border-right: 0; border-radius: 4px 0 0 4px; color: #555; }
.search-cat select { appearance: none; width: 100%; height: 100%; padding: 0 16px; color: #555; }
.search-cat svg { position: absolute; right: 14px; top: 20px; }
.search input { flex: 1; min-width: 0; padding: 0 15px; border: solid #e8e8e8; border-width: 2px 0; }
.search input::placeholder { color: #777; opacity: 1; }
.search button { width: 67px; background: #146cda; border-radius: 0 4px 4px 0; display: flex; align-items: center; justify-content: center; }
.tools { display: flex; justify-content: flex-end; align-items: center; gap: 29px; }
.tools a { position: relative; display: block; height: 26px; }
.tools a + a + a { margin-left: -4px; }
.badge { position: absolute; right: -11px; bottom: -5px; width: 21px; height: 21px; border-radius: 50%; background: #e4402b; color: #fff; font-size: 12px; line-height: 21px; font-weight: 700; text-align: center; }

.main-nav { border: solid #e5e5e5; border-width: 1px 0; }
.nav-row { display: flex; gap: 34px; height: 61px; align-items: center; font-weight: 700; }
.nav-row a { display: flex; align-items: center; gap: 3px; }
.nav-row svg { color: #777; }
.nav-row .active { color: #1a6cc9; border-bottom: 2px solid #1a66bd; padding-top: 4px; padding-bottom: 2px; }
.nav-row a:nth-child(n+6) { margin-left: -2px; }
.crumbs { background: #f4f4f4; }
.crumb-row { display: flex; align-items: center; gap: 11px; height: 116px; color: #555; }
.crumb-row span { color: #2a74cf; }

h1 { padding: 62px 0 42px; font-size: 35px; line-height: 50px; font-weight: 700; }
.contact-row { display: grid; grid-template-columns: 2fr 3fr; margin: 0 10px; }
.card { background: #146cda; border-radius: 20px; box-shadow: inset 0 9px 40px rgba(0, 0, 0, .47); padding: 98px 21px; min-height: 641px; color: #fff; font: 16px/20px Roboto, sans-serif; }
.card h2 { font-size: 25px; line-height: 32px; font-weight: 700; }
.lead { margin-top: 20px; line-height: 24px; }
.info { list-style: none; margin-top: 36px; display: grid; gap: 36px; }
.info li { display: grid; grid-template-columns: 30px 1fr; column-gap: 24px; fill: #fff; }
.info svg { justify-self: center; margin-top: 5px; }
.info .one { height: 20px; padding-left: 2px; }
.info li:not(:last-child) svg { margin-bottom: -5px; }
.info address { font-style: normal; }
.social { display: flex; gap: 30px; margin: 61px 0 0 53px; }
.social svg { display: block; width: 26px; height: 26px; fill: #fff; }

.contact-form { padding: 70px 85px 0; display: flex; flex-direction: column; }
.contact-form input { height: 41px; padding: 0; border-bottom: 1px solid #777; margin-bottom: 51px; font-size: 16px; }
.contact-form input:nth-of-type(3) { margin-bottom: 31px; }
.contact-form ::placeholder { color: #8a8a8a; opacity: 1; }
.contact-form textarea { height: 142px; padding: 28px 9px; border: 1px solid #777; border-radius: 2px; font-size: 16px; line-height: 22px; resize: vertical; }
.count { align-self: flex-end; margin: 4px 0 30px; font-size: 12px; color: #777; }
.contact-form button { align-self: flex-start; height: 40px; padding: 0 11px; background: #3ca7e3; border-radius: 1px; color: #fff; }

.map { position: relative; margin: 142px 10px 92px; font-family: Roboto, sans-serif; overflow: hidden; }
.map-canvas { display: block; width: 100%; font-family: Roboto, "Noto Sans", sans-serif; fill: #2e3134; }
.mid, .midt, .om { text-anchor: middle; }
.end { text-anchor: end; }
.area { font-size: 12px; }
.area-md { font-size: 15px; }
.area-lg { font-size: 17px; fill: #1e2022; }
.sm { font-size: 11px; fill: #3b3e41; }
.poi { font-size: 14px; font-weight: 500; }
.kn { font-size: 12px; }
.teal { fill: #10585f; }
.orange { fill: #874b14; }
.green { fill: #1a5c2c; }
.blue { fill: #1f4a93; }
.dark { fill: #26282a; }
.slate { fill: #38474e; }
.om { font-size: 11px; fill: #b5babc; }
.map-hint { position: absolute; inset: 0; display: flex; align-items: center; justify-content: center; color: #fff; font-size: 22px; }
.map-link { position: absolute; left: 10px; top: 11px; padding: 0 15px; background: #fff; border-radius: 2px; color: #2f78d8; font-size: 12px; line-height: 26px; }
.map-sat { position: absolute; left: 10px; bottom: 11px; width: 42px; height: 42px; border: 2px solid #fff; border-radius: 3px; overflow: hidden; }
.map-sat svg { display: block; }
.google { position: absolute; left: 0; right: 0; bottom: 16px; text-align: center; font: 700 15px/20px "Open Sans", sans-serif; text-shadow: 0 0 1px #fff, 0 0 1px #fff, 0 0 2px #fff; }
.google .b { color: #4285f4; }
.google .r { color: #ea4335; }
.google .y { color: #fbbc05; }
.google .g { color: #34a853; }
.map-zoom { position: absolute; right: 10px; bottom: 23px; width: 40px; background: #fff; border-radius: 2px; }
.map-zoom button { display: flex; align-items: center; justify-content: center; width: 40px; height: 41px; }
.map-zoom button + button { border-top: 1px solid #e6e6e6; height: 42px; }
.map-legal { position: absolute; right: 0; bottom: 0; display: flex; background: #d6d6d6; color: #111; font-size: 10px; line-height: 14px; }
.map-legal > * { padding: 0 6px; }
.map-legal > * + * { border-left: 1px solid #999; }

footer { background: #146cda; color: #fff; }
.foot-grid { display: grid; grid-template-columns: repeat(4, 1fr); gap: 32px; height: 133px; padding-top: 77px; overflow: hidden; }
.foot-grid h3 { font-size: 16px; line-height: 20px; font-weight: 700; }
.foot-grid .xl { font-size: 20px; line-height: 28px; }
.foot-grid .lg { font-size: 18px; line-height: 24px; }
.foot-grid p { margin-top: 18px; }
.foot-grid .xl + p { margin-top: 16px; }
```
